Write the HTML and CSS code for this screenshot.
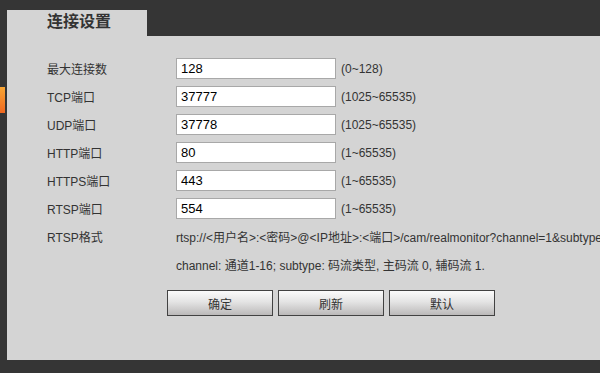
FILE: index.html
```html
<!DOCTYPE html>
<html lang="zh-CN">
<head>
    <meta charset="UTF-8">
    <meta name="viewport" content="width=device-width, initial-scale=1.0">
    <title>连接设置</title>
    <link rel="stylesheet" href="styles.css">
</head>
<body>

    <div class="page">

        <!-- Left edge: menu marker -->
        <div class="side">
            <div class="marker"></div>
        </div>

        <!-- Main area: tab + settings panel -->
        <div class="main">
            <div class="tab">连接设置</div>

            <div class="panel">
                <div class="form">
                    <div class="row">
                        <label>最大连接数</label>
                        <input type="text" value="128">
                        <span class="range">(0~128)</span>
                    </div>
                    <div class="row">
                        <label>TCP端口</label>
                        <input type="text" value="37777">
                        <span class="range">(1025~65535)</span>
                    </div>
                    <div class="row">
                        <label>UDP端口</label>
                        <input type="text" value="37778">
                        <span class="range">(1025~65535)</span>
                    </div>
                    <div class="row">
                        <label>HTTP端口</label>
                        <input type="text" value="80">
                        <span class="range">(1~65535)</span>
                    </div>
                    <div class="row">
                        <label>HTTPS端口</label>
                        <input type="text" value="443">
                        <span class="range">(1~65535)</span>
                    </div>
                    <div class="row">
                        <label>RTSP端口</label>
                        <input type="text" value="554">
                        <span class="range">(1~65535)</span>
                    </div>
                    <div class="row">
                        <label>RTSP格式</label>
                        <span class="note">rtsp://&lt;用户名&gt;:&lt;密码&gt;@&lt;IP地址&gt;:&lt;端口&gt;/cam/realmonitor?channel=1&amp;subtype=0</span>
                    </div>
                    <div class="row">
                        <label></label>
                        <span class="note">channel: 通道1-16; subtype: 码流类型, 主码流 0, 辅码流 1.</span>
                    </div>
                </div>

                <div class="buttons">
                    <button>确定</button>
                    <button>刷新</button>
                    <button>默认</button>
                </div>
            </div>
        </div>

    </div>

</body>
</html>
```

FILE: styles.css
```css
html, body {
    margin: 0;
    padding: 0;
    width: 600px;
    height: 373px;
    overflow: hidden;
    background-color: #353535;
    font-family: "Liberation Sans", Arial, "Noto Sans CJK SC", sans-serif;
    font-size: 12px;
    color: #333;
}

.page {
    display: flex;
    height: 373px;
}

/* Left edge with the orange menu marker */
.side {
    width: 7px;
    flex-shrink: 0;
}

.marker {
    width: 5px;
    height: 26px;
    margin-top: 87px;
    background: linear-gradient(#f8a634, #f06820);
}

/* Main area */
.main {
    flex: 1;
    padding-top: 10px;
    min-width: 0;
}

.tab {
    width: 100px;
    height: 26px;
    padding-left: 40px;
    background-color: #d4d4d4;
    font-size: 16px;
    font-weight: bold;
    line-height: 24px;
    color: #333;
}

.panel {
    height: 324px;
    background-color: #d4d4d4;
    padding: 22px 0 0 40px;
    box-sizing: border-box;
    overflow: hidden;
}

/* Settings rows */
.form {
    display: flex;
    flex-direction: column;
    gap: 7px;
}

.row {
    display: flex;
    align-items: center;
    height: 21px;
    white-space: nowrap;
}

.row label {
    width: 129px;
    flex-shrink: 0;
    font-size: 12px;
}

.row input {
    width: 160px;
    height: 21px;
    box-sizing: border-box;
    margin: 0;
    padding: 0 0 0 4px;
    border: 1px solid #a8a8a8;
    background: #fff;
    font-family: "Liberation Sans", Arial, sans-serif;
    font-size: 13px;
    color: #000;
    outline: none;
}

.range {
    margin-left: 5px;
}

.note {
    font-size: 12px;
}

/* Bottom buttons */
.buttons {
    display: flex;
    gap: 5px;
    margin: 15px 0 0 120px;
}

.buttons button {
    width: 106px;
    height: 26px;
    margin: 0;
    padding: 0;
    border: 1px solid #424242;
    background: linear-gradient(#fbfbfb, #e4e4e4 45%, #bbb9b9);
    font-family: "Noto Sans CJK SC", sans-serif;
    font-size: 12px;
    color: #333;
    cursor: pointer;
}
```
